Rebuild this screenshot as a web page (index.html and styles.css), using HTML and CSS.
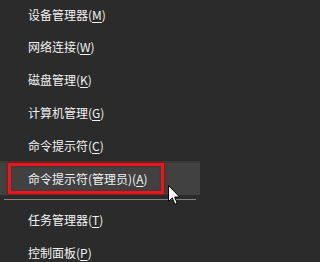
FILE: index.html
```html
<!DOCTYPE html>
<html lang="zh-CN">
<head>
<meta charset="utf-8">
<link rel="stylesheet" href="styles.css">
</head>
<body>
<ul class="menu">
  <li class="item">设备管理器(<u>M</u>)</li>
  <li class="item">网络连接(<u>W</u>)</li>
  <li class="item">磁盘管理(<u>K</u>)</li>
  <li class="item">计算机管理(<u>G</u>)</li>
  <li class="item">命令提示符(<u>C</u>)</li>
  <li class="item item-active">命令提示符(管理员)(<u>A</u>)</li>
  <li class="sep" aria-hidden="true"></li>
  <li class="item">任务管理器(<u>T</u>)</li>
  <li class="item">控制面板(<u>P</u>)</li>
</ul>
<svg class="cursor" width="13" height="21" viewBox="0 0 13 21" aria-hidden="true">
  <path d="M0.5 0.5 L0.5 16.5 L4.3 12.9 L6.9 19.3 L9.2 18.3 L6.6 12 L11.6 12 Z" fill="#ffffff" stroke="#000000" stroke-width="1" stroke-linejoin="miter"/>
</svg>
</body>
</html>
```
FILE: styles.css
```css
html, body {
  margin: 0;
  padding: 0;
  background: #2b2b2b;
  width: 200px;
  height: 262px;
  overflow: hidden;
}
body {
  position: relative;
  font-family: "Noto Sans CJK SC", "Noto Sans", sans-serif;
  font-size: 12px;
  color: #f2f2f2;
}
.menu {
  list-style: none;
  margin: -1.4px 0 0 0;
  padding: 0;
}
.item {
  height: 32.8px;
  line-height: 32.8px;
  padding-left: 28px;
  white-space: nowrap;
  position: relative;
}
.item u {
  text-decoration-thickness: 1px;
  text-underline-offset: 2px;
}
.item-active {
  background: #414141;
  box-shadow: 0 -2px 0 #3a3a3a;
}
.item-active::after {
  content: "";
  position: absolute;
  left: 8px;
  top: 0;
  width: 150px;
  height: 25px;
  border: 3px solid #e3191b;
  box-shadow: 0 0 2px 1px rgba(150, 10, 10, 0.7), inset 0 0 2px rgba(150, 10, 10, 0.7);
}
.sep {
  height: 1px;
  margin: 3.5px 4px 4.5px 4px;
  background: #858585;
}
.cursor {
  position: absolute;
  left: 167.5px;
  top: 184.5px;
}
```
